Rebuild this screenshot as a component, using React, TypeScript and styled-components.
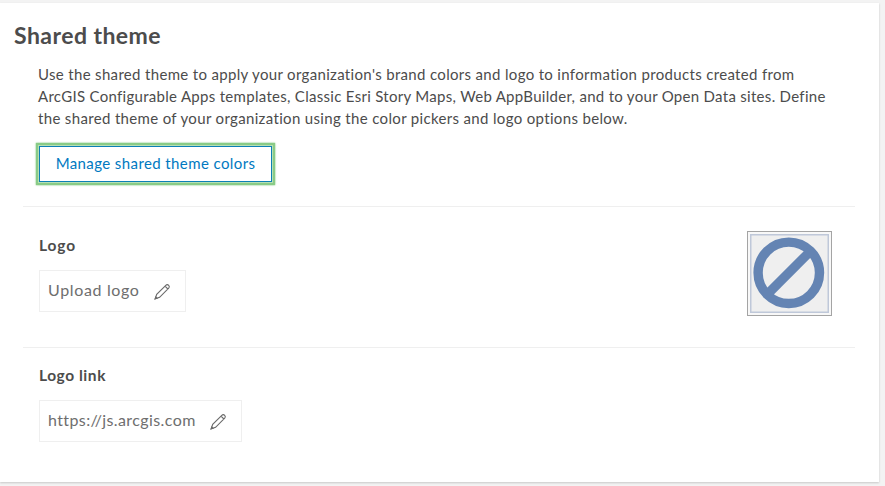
import React from "react";
import styled, { createGlobalStyle } from "styled-components";

const GlobalStyle = createGlobalStyle`
  *, *::before, *::after { box-sizing: border-box; }
  body {
    margin: 0;
    background: #f3f3f3;
    color: #4c4c4c;
    font-family: Lato, "Open Sans", sans-serif;
    overflow: hidden;
  }
`;

const Page = styled.main`
  height: 486px;
  padding: 3px 6px 4px 0;
`;

const Panel = styled.section`
  height: 479px;
  padding: 18px 24px 0 14px;
  background: #fff;
  box-shadow: 0 1px 2px rgba(0, 0, 0, 0.18);
`;

const Title = styled.h1`
  margin: 0;
  font-size: 23px;
  font-weight: 700;
  line-height: 28px;
  letter-spacing: 0.45px;
  color: #4c4c4c;
`;

const Section = styled.div<{ $height: number; $top: number }>`
  display: flex;
  justify-content: space-between;
  align-items: flex-start;
  height: ${({ $height }) => $height}px;
  margin-left: 9px;
  padding: ${({ $top }) => $top}px 23px 0 16px;

  & + & {
    border-top: 1px solid #efefef;
  }
`;

const Column = styled.div`
  display: flex;
  flex-direction: column;
  align-items: flex-start;
`;

const Description = styled.p`
  margin: 0 0 17px -1px;
  font-size: 15px;
  line-height: 22px;
  white-space: nowrap;
`;

const Line = styled.span<{ $spacing: number }>`
  display: block;
  letter-spacing: ${({ $spacing }) => $spacing}px;
`;

const ThemeButton = styled.button`
  width: 233px;
  height: 36px;
  padding: 0 0 2px;
  border: 1px solid #0d7fb5;
  background: #fff;
  color: #0079c1;
  font: 400 15px/22px Lato, "Open Sans", sans-serif;
  letter-spacing: 0.4px;
  white-space: nowrap;
  box-shadow: 0 0 0 1px #b5dfb4, 0 0 1px 3px #89cb86, 0 0 2px 3px #a9d9a6;
  border-radius: 0;
`;

const Label = styled.h2<{ $spacing: number }>`
  margin: 0 0 14px;
  font-size: 15.5px;
  font-weight: 700;
  line-height: 22px;
  letter-spacing: ${({ $spacing }) => $spacing}px;
`;

const EditField = styled.button<{ $width: number; $spacing: number }>`
  display: flex;
  align-items: center;
  justify-content: space-between;
  width: ${({ $width }) => $width}px;
  height: 42px;
  padding: 0 14px 0 8px;
  border: 1px solid #efefef;
  background: #fff;
  color: #6e6e6e;
  font: 400 16px/24px Lato, "Open Sans", sans-serif;
  letter-spacing: ${({ $spacing }) => $spacing}px;
`;

const FieldText = styled.span`
  padding-bottom: 2px;
`;

const LogoPreview = styled.div`
  width: 85px;
  height: 85px;
  margin-top: -3px;
  padding: 2px;
  border: 1px solid #a4a4a4;
  background: #f8f8f8;

  svg { display: block; }
`;

function Pencil() {
  return (
    <svg width="17" height="17" viewBox="0 0 17 17" fill="none" stroke="#6a6a6a" strokeWidth="1.1">
      <path d="M1.2 15.8 2.7 11.4 11.8 2.3Q13.2.9 14.7 2.4 16 3.8 14.7 5.2L5.6 14.3Z M11 3.1l2.9 2.9" />
      <path d="M1.2 15.8l1.8-.6-1.2-1.2z" fill="#6a6a6a" />
    </svg>
  );
}

function NoLogo() {
  return (
    <svg width="79" height="79" viewBox="0 0 79 79">
      <rect x=".75" y=".75" width="77.5" height="77.5" fill="#efefef" stroke="#bfc8d9" strokeWidth="1.5" />
      <circle cx="38.8" cy="38.8" r="30.7" fill="none" stroke="#6484b3" strokeWidth="9.4" />
      <path d="M17.5 60.1 60.1 17.5" stroke="#6484b3" strokeWidth="9.4" />
    </svg>
  );
}

export default function App() {
  return (
    <>
      <GlobalStyle />
      <Page>
        <Panel>
          <Title>Shared theme</Title>
          <Section $height={157} $top={14}>
            <Column>
              <Description>
                <Line $spacing={0.33}>Use the shared theme to apply your organization's brand colors and logo to information products created from</Line>
                <Line $spacing={0.295}>ArcGIS Configurable Apps templates, Classic Esri Story Maps, Web AppBuilder, and to your Open Data sites. Define</Line>
                <Line $spacing={0.34}>the shared theme of your organization using the color pickers and logo options below.</Line>
              </Description>
              <ThemeButton>Manage shared theme colors</ThemeButton>
            </Column>
          </Section>
          <Section $height={141} $top={27}>
            <Column>
              <Label $spacing={0.9}>Logo</Label>
              <EditField $width={147} $spacing={0.65}>
                <FieldText>Upload logo</FieldText>
                <Pencil />
              </EditField>
            </Column>
            <LogoPreview>
              <NoLogo />
            </LogoPreview>
          </Section>
          <Section $height={134} $top={16}>
            <Column>
              <Label $spacing={0.55}>Logo link</Label>
              <EditField $width={203} $spacing={0.4}>
                <FieldText>https://js.arcgis.com</FieldText>
                <Pencil />
              </EditField>
            </Column>
          </Section>
        </Panel>
      </Page>
    </>
  );
}
